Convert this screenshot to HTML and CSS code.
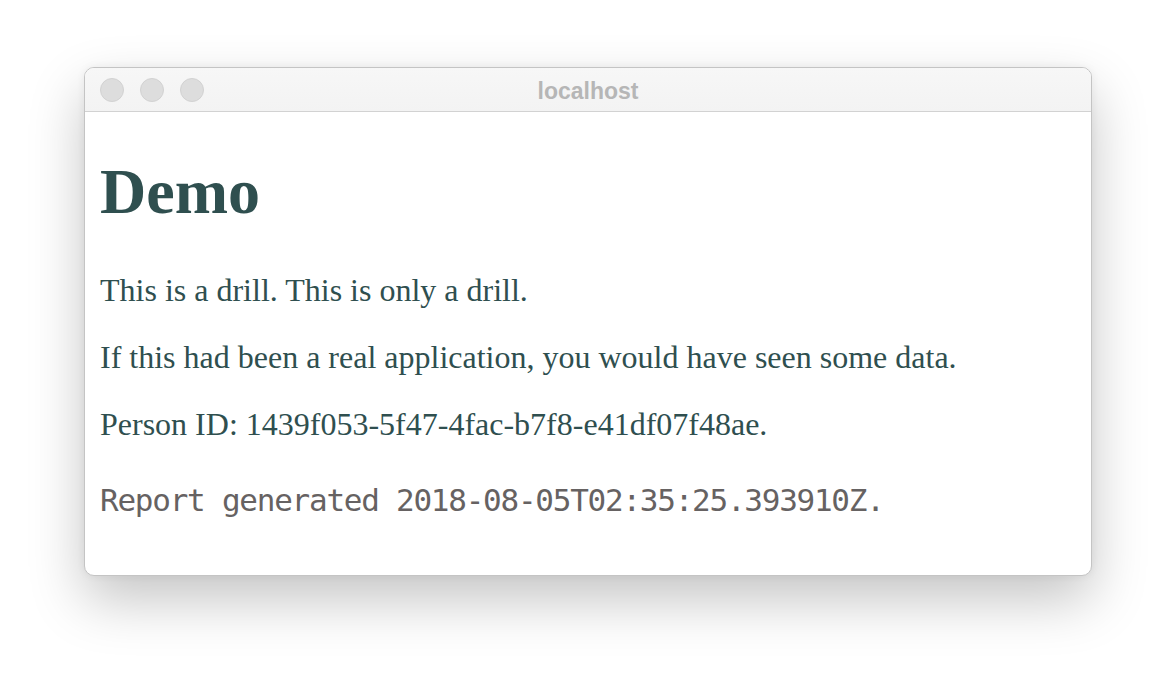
FILE: index.html
```html
<!DOCTYPE html>
<html>
<head>
<meta charset="utf-8">
<title>localhost</title>
<link rel="stylesheet" href="styles.css">
</head>
<body>
<div class="window">
  <div class="titlebar">
    <div class="lights">
      <span class="light"></span>
      <span class="light"></span>
      <span class="light"></span>
    </div>
    <div class="title">localhost</div>
  </div>
  <div class="content">
    <h1 class="heading">Demo</h1>
    <p class="para">This is a drill. This is only a drill.</p>
    <p class="para">If this had been a real application, you would have seen some data.</p>
    <p class="para">Person ID: 1439f053-5f47-4fac-b7f8-e41df07f48ae.</p>
    <pre class="report">Report generated 2018-08-05T02:35:25.393910Z.</pre>
  </div>
</div>
</body>
</html>
```

FILE: styles.css
```css
html, body {
  margin: 0;
  background: #ffffff;
}
body {
  padding: 67px 84px;
  width: 1176px;
  height: 676px;
  box-sizing: border-box;
  overflow: hidden;
}
.window {
  width: 1008px;
  height: 509px;
  box-sizing: border-box;
  border: 1px solid #c4c4c4;
  border-radius: 10px;
  background: #ffffff;
  overflow: hidden;
  box-shadow: 0 24px 55px rgba(0, 0, 0, 0.23), 0 0 8px rgba(0, 0, 0, 0.06);
  display: flex;
  flex-direction: column;
}
.titlebar {
  position: relative;
  height: 43px;
  flex: none;
  background: linear-gradient(#f7f7f7, #f3f3f3);
  border-bottom: 1px solid #d2d2d2;
  display: flex;
  align-items: center;
  justify-content: center;
}
.lights {
  position: absolute;
  left: 15px;
  top: 10px;
  display: flex;
  gap: 16px;
}
.light {
  width: 22px;
  height: 22px;
  border-radius: 50%;
  background: #dddddd;
  border: 1px solid #d2d2d2;
}
.title {
  font-family: "Liberation Sans", Arial, sans-serif;
  font-weight: bold;
  font-size: 23px;
  color: #b6b6b6;
  margin-top: 4px;
}
.content {
  padding: 0 15px;
  color: #2f4f4f;
  font-family: "Liberation Serif", "Times New Roman", serif;
  font-size: 32px;
}
.heading {
  font-size: 64px;
  font-weight: bold;
  margin: 43px 0;
}
.para {
  margin: 30px 0;
}
.report {
  font-family: "DejaVu Sans Mono", monospace;
  font-size: 31px;
  letter-spacing: -1.25px;
  color: #666262;
  margin: 39px 0 0;
}
```
